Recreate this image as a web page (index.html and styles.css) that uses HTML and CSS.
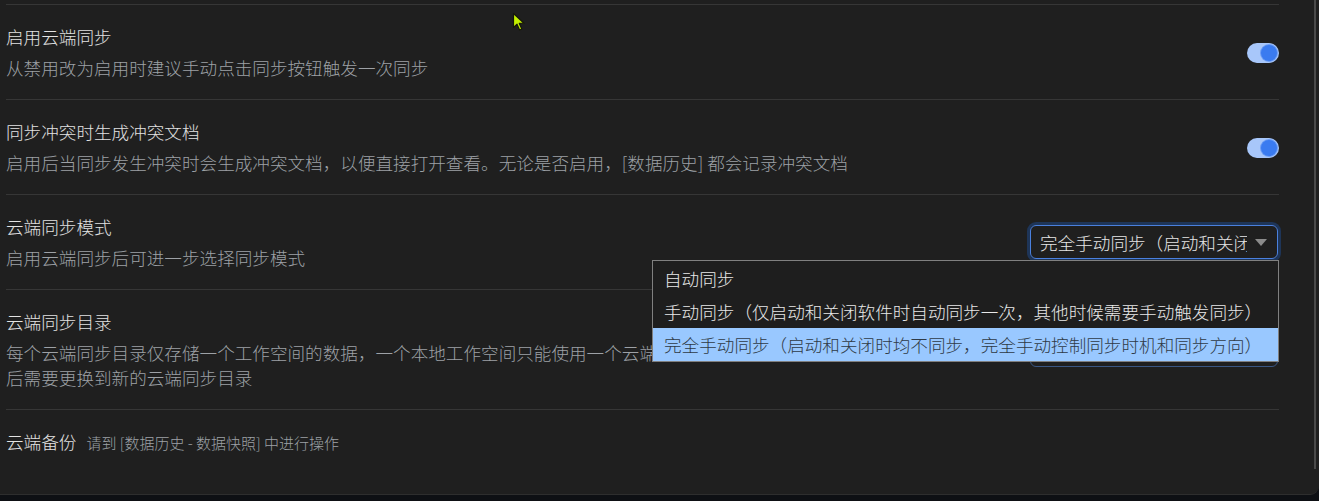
FILE: index.html
```html
<!DOCTYPE html>
<html lang="zh-CN">
<head>
    <meta charset="UTF-8">
    <meta name="viewport" content="width=device-width, initial-scale=1.0">
    <title>云端同步设置</title>
    <link rel="stylesheet" href="styles.css">
</head>
<body>
    <div class="panel">
        <div class="content">
            <div class="row">
                <div class="info">
                    <div class="title">启用云端同步</div>
                    <div class="desc">从禁用改为启用时建议手动点击同步按钮触发一次同步</div>
                </div>
                <span class="switch"><span class="knob"></span></span>
            </div>
            <div class="row">
                <div class="info">
                    <div class="title">同步冲突时生成冲突文档</div>
                    <div class="desc">启用后当同步发生冲突时会生成冲突文档，以便直接打开查看。无论是否启用，[数据历史] 都会记录冲突文档</div>
                </div>
                <span class="switch"><span class="knob"></span></span>
            </div>
            <div class="row">
                <div class="info">
                    <div class="title">云端同步模式</div>
                    <div class="desc">启用云端同步后可进一步选择同步模式</div>
                </div>
                <div class="select-wrap">
                    <div class="select focus">
                        <span class="value">完全手动同步（启动和关闭时均不同步）</span>
                        <span class="arrow"></span>
                    </div>
                    <div class="options">
                        <div class="option">自动同步</div>
                        <div class="option">手动同步（仅启动和关闭软件时自动同步一次，其他时候需要手动触发同步）</div>
                        <div class="option active">完全手动同步（启动和关闭时均不同步，完全手动控制同步时机和同步方向）</div>
                    </div>
                </div>
            </div>
            <div class="row">
                <div class="info">
                    <div class="title">云端同步目录</div>
                    <div class="desc">每个云端同步目录仅存储一个工作空间的数据，一个本地工作空间只能使用一个云端同步目录，如果删除或重建了云端同步目录之后需要更换到新的云端同步目录</div>
                </div>
                <div class="select-wrap">
                    <div class="select">
                        <span class="value">main</span>
                        <span class="arrow"></span>
                    </div>
                </div>
            </div>
            <div class="row">
                <div class="info">
                    <div class="title">云端备份<span class="hint">请到 [数据历史 - 数据快照] 中进行操作</span></div>
                </div>
            </div>
        </div>
        <div class="scrollbar"></div>
    </div>

    <svg class="cursor" width="14" height="20" viewBox="0 0 14 20">
        <path d="M1.5 1.5 L1.5 15.5 L5 12.2 L7.6 18 L9.8 17 L7.3 11.4 L12 11.2 Z" fill="#c4f000" stroke="#15180a" stroke-width="1.2" stroke-linejoin="round"/>
    </svg>
</body>
</html>
```

FILE: styles.css
```css
body {
    margin: 0;
    background: #0e1014;
    font-family: "Noto Sans CJK SC", "Noto Sans", sans-serif;
    font-weight: 300;
    position: relative;
}
.panel {
    height: 494px;
    background: #1f1f1f;
    border-bottom: 1px solid #2e2e2e;
    border-radius: 0 0 9px 0;
    display: flex;
    padding-left: 6px;
    overflow: hidden;
}
.content {
    flex: 1;
    padding-top: 4px;
    margin-right: 35px;
}
.scrollbar {
    width: 2px;
    height: 469px;
    background: #4a4a4a;
    margin-right: 3px;
}
.row {
    display: flex;
    align-items: center;
    justify-content: space-between;
    gap: 16px;
    padding: 19px 0;
    border-top: 1px solid #363636;
}
.info {
    flex: 1;
}
.title {
    font-size: 17.6px;
    line-height: 26px;
    color: #e2e2e2;
}
.desc {
    margin-top: 5px;
    font-size: 17.6px;
    line-height: 25px;
    color: #9da1a6;
}
.hint {
    margin-left: 10px;
    font-size: 15px;
    color: #9da1a6;
}

.switch {
    width: 32px;
    height: 20px;
    border-radius: 10px;
    background: #a8c7fa;
    display: flex;
    align-items: center;
    justify-content: flex-end;
    padding-right: 2px;
    box-sizing: border-box;
    margin-top: 2px;
}
.knob {
    width: 16px;
    height: 16px;
    border-radius: 50%;
    background: #3a7bf0;
    box-shadow: 0 0 0 1px #6d9ef5;
}

.select-wrap {
    position: relative;
    width: 248px;
    margin-right: 1px;
}
.select {
    height: 34px;
    box-sizing: border-box;
    border: 1px solid #3a5683;
    border-radius: 6px;
    display: flex;
    align-items: center;
    padding: 0 10px 0 9px;
    color: #e6e6e6;
    font-size: 17.6px;
}
.select.focus {
    border-color: #4a80de;
    box-shadow: 0 0 0 3px #1e3558;
}
.value {
    flex: 1;
    min-width: 0;
    white-space: nowrap;
    overflow: hidden;
    margin-right: 8px;
}
.arrow {
    width: 0;
    height: 0;
    border-left: 6px solid transparent;
    border-right: 6px solid transparent;
    border-top: 7px solid #8b8b8b;
}
.options {
    position: absolute;
    top: calc(100% + 1px);
    right: -1px;
    width: 627px;
    box-sizing: border-box;
    border: 1px solid #808080;
    background: #1e1e1e;
    padding-top: 1px;
    z-index: 2;
}
.option {
    height: 33px;
    line-height: 33px;
    padding-left: 11px;
    font-size: 17.6px;
    color: #e8e8e8;
    white-space: nowrap;
}
.option.active {
    background: #99c8ff;
    color: #2f3a46;
}

.cursor {
    position: absolute;
    left: 512px;
    top: 12px;
}
```
